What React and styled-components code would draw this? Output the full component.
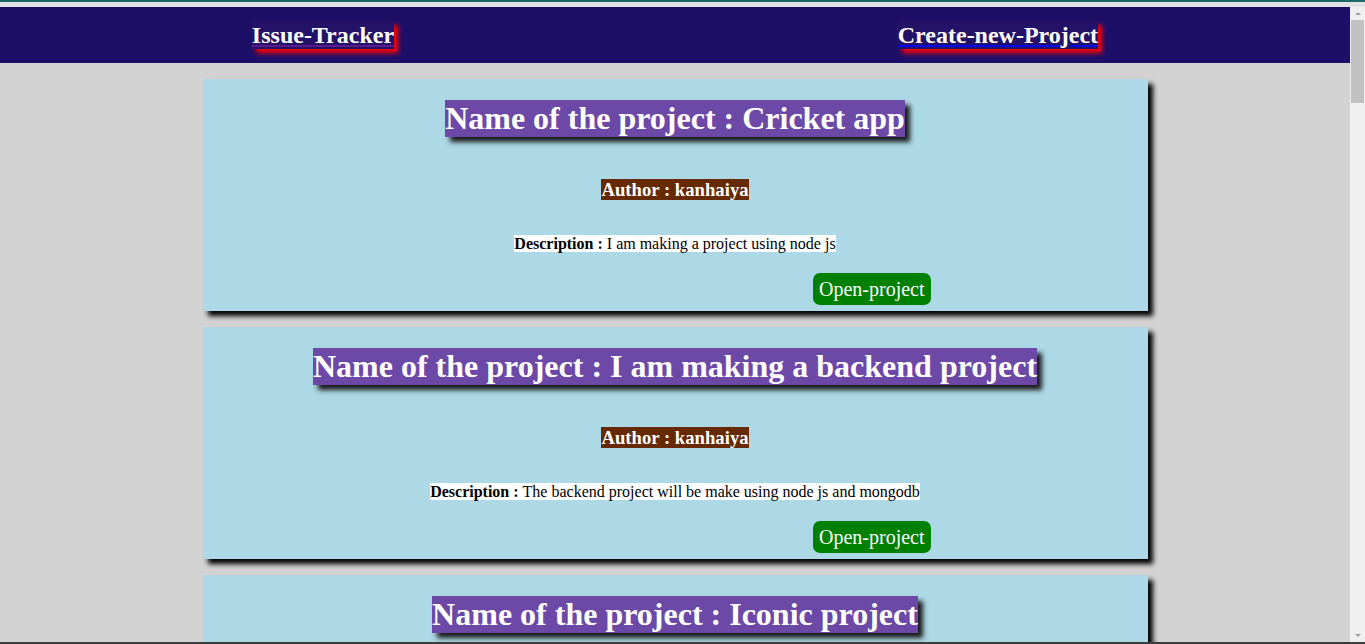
import React from "react";
import styled, { createGlobalStyle } from "styled-components";

const GlobalStyle = createGlobalStyle`
  html, body {
    margin: 0;
    padding: 0;
    background-color: lightgray;
    font-family: "Liberation Serif", "Times New Roman", serif;
    overflow: hidden;
  }
`;

const TopStrip = styled.div`
  height: 5px;
  border-top: 2px solid #1b6868;
  background-color: #e2e2e2;
`;

const BottomStrip = styled.div`
  height: 2px;
  background-color: #3c3c3c;
`;

const Frame = styled.div`
  display: flex;
  height: calc(100vh - 9px);
`;

const Page = styled.div`
  flex: 1;
  overflow: hidden;
  background-color: lightgray;
`;

const ScrollRail = styled.div`
  width: 15px;
  display: flex;
  flex-direction: column;
  align-items: center;
  background-color: #f0f0f0;
`;

const Arrow = styled.div`
  height: 13px;
  width: 15px;
  display: flex;
  align-items: center;
  justify-content: center;

  &::before {
    content: "";
    border-left: 3px solid transparent;
    border-right: 3px solid transparent;
    ${props =>
      props.$down
        ? "border-top: 3px solid #a3a3a3;"
        : "border-bottom: 3px solid #a3a3a3;"}
  }
`;

const Thumb = styled.div`
  width: 13px;
  height: 83px;
  background-color: #c1c1c1;
`;

const Spacer = styled.div`
  flex: 1;
`;

const Navbar = styled.nav`
  display: flex;
  justify-content: space-around;
  align-items: center;
  height: 56px;
  background-color: #1d0f68;
`;

const NavLink = styled.a`
  display: inline-block;
  font-size: 24px;
  font-weight: bold;
  line-height: 28px;
  text-decoration: underline;
  text-decoration-color: ${props => props.$line};
  text-decoration-thickness: 2px;
  text-underline-offset: 2px;
  background-color: #231268;
  box-shadow: 4px 4px 5px red;
  cursor: pointer;

  span {
    color: white;
  }
`;

const List = styled.div`
  display: flex;
  flex-direction: column;
  align-items: center;
  gap: 16px;
  padding-top: 16px;
  padding-bottom: 16px;
`;

const Card = styled.div`
  width: 70%;
  box-sizing: border-box;
  display: flex;
  flex-direction: column;
  align-items: center;
  padding: 21px 0 6px 0;
  background-color: lightblue;
  box-shadow: 5px 5px 5px black;
`;

const Title = styled.h1`
  margin: 0;
  font-size: 32px;
  line-height: 37px;
  font-weight: bold;
  color: white;
  background-color: #6c48a7;
  box-shadow: 5px 5px 5px #1a1a1a;
`;

const Author = styled.h3`
  margin: 42px 0 0 0;
  font-size: 18.72px;
  line-height: 21px;
  font-weight: bold;
  color: white;
  background-color: #662900;
`;

const Description = styled.p`
  margin: 35px 0 0 0;
  font-size: 16px;
  line-height: 17px;
  color: black;
  background-color: white;

  b {
    font-weight: bold;
  }
`;

const ButtonRow = styled.div`
  align-self: stretch;
  display: flex;
  justify-content: flex-end;
  padding-right: 217px;
  margin-top: 21px;
`;

const OpenButton = styled.button`
  font-family: "Liberation Serif", "Times New Roman", serif;
  font-size: 20px;
  line-height: 22px;
  color: white;
  background-color: green;
  border: none;
  border-radius: 7px;
  padding: 5px 6px;
  cursor: pointer;
`;

const projects = [
  {
    name: "Cricket app",
    author: "kanhaiya",
    description: "I am making a project using node js"
  },
  {
    name: "I am making a backend project",
    author: "kanhaiya",
    description: "The backend project will be make using node js and mongodb"
  },
  {
    name: "Iconic project",
    author: "kanhaiya",
    description: "This project is about icons"
  }
];

function ProjectCard({ project }) {
  return (
    <Card>
      <Title>Name of the project : {project.name}</Title>
      <Author>Author : {project.author}</Author>
      <Description>
        <b>Description : </b>
        {project.description}
      </Description>
      <ButtonRow>
        <OpenButton>Open-project</OpenButton>
      </ButtonRow>
    </Card>
  );
}

export default function App() {
  return (
    <>
      <GlobalStyle />
      <TopStrip />
      <Frame>
        <Page>
          <Navbar>
            <NavLink $line="#5a1a8b">
              <span>Issue-Tracker</span>
            </NavLink>
            <NavLink $line="#0000ee">
              <span>Create-new-Project</span>
            </NavLink>
          </Navbar>
          <List>
            {projects.map((project, i) => (
              <ProjectCard key={i} project={project} />
            ))}
          </List>
        </Page>
        <ScrollRail>
          <Arrow />
          <Thumb />
          <Spacer />
          <Arrow $down />
        </ScrollRail>
      </Frame>
      <BottomStrip />
    </>
  );
}
